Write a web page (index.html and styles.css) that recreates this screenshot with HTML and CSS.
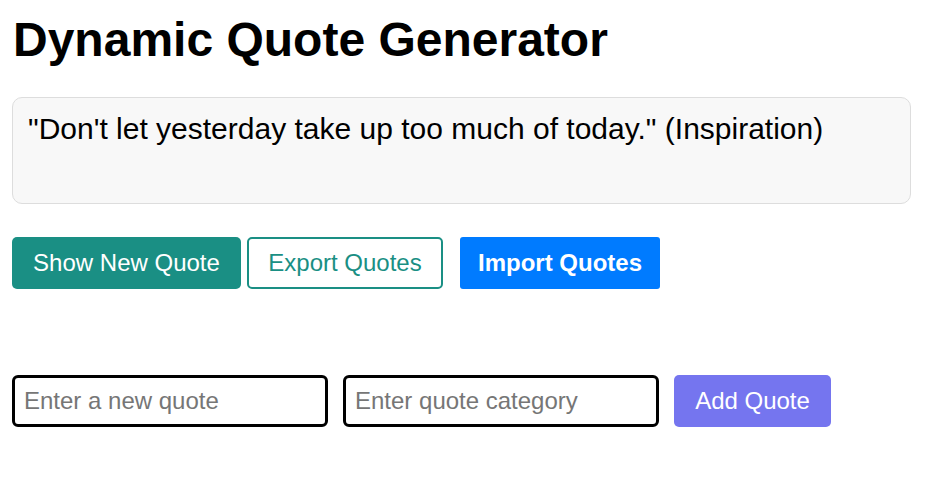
FILE: index.html
```html
<!DOCTYPE html>
<html lang="en">
<head>
<meta charset="UTF-8">
<title>Dynamic Quote Generator</title>
<link rel="stylesheet" href="styles.css">
</head>
<body>
  <h1 class="title">Dynamic Quote Generator</h1>
  <div class="quote-display">"Don't let yesterday take up too much of today." (Inspiration)</div>
  <div class="actions">
    <button class="btn btn-primary">Show New Quote</button>
    <button class="btn btn-outline">Export Quotes</button>
    <button class="btn btn-import">Import Quotes</button>
  </div>
  <div class="add-form">
    <input class="field" type="text" placeholder="Enter a new quote">
    <input class="field" type="text" placeholder="Enter quote category">
    <button class="btn btn-add">Add Quote</button>
  </div>
</body>
</html>
```
FILE: styles.css
```css
* { box-sizing: border-box; }
html, body { margin: 0; background: #ffffff; }
body {
  padding: 12px 14px 12px 12px;
  font-family: "Liberation Sans", Arial, sans-serif;
  color: #000;
}
.title {
  margin: 0 0 30px 1px;
  font-size: 48px;
  font-weight: bold;
  line-height: 55px;
}
.quote-display {
  min-height: 107px;
  padding: 14px 15px;
  border: 1px solid #dddddd;
  border-radius: 10px;
  background: #f8f8f8;
  font-size: 30px;
  line-height: 34px;
}
.actions {
  display: flex;
  align-items: center;
  margin-top: 33px;
}
.btn {
  height: 52px;
  padding: 0 10px;
  font-family: "Liberation Sans", Arial, sans-serif;
  font-size: 24px;
  border: none;
  border-radius: 5px;
  cursor: pointer;
}
.btn-primary {
  width: 229px;
  background: #1a8f84;
  color: #ffffff;
}
.btn-outline {
  width: 196px;
  margin-left: 6px;
  background: #ffffff;
  color: #1a8f84;
  border: 2px solid #1a8f84;
}
.btn-import {
  width: 200px;
  margin-left: 17px;
  background: #007bff;
  color: #ffffff;
  font-weight: bold;
  border-radius: 3px;
}
.add-form {
  display: flex;
  align-items: center;
  gap: 15px;
  margin-top: 86px;
}
.field {
  width: 316px;
  height: 52px;
  padding: 0 9px;
  border: 3px solid #000;
  border-radius: 6px;
  font-family: "Liberation Sans", Arial, sans-serif;
  font-size: 24px;
  color: #000;
}
.field::placeholder { color: #767676; }
.btn-add {
  width: 157px;
  background: #7575ef;
  color: #ffffff;
}
```
